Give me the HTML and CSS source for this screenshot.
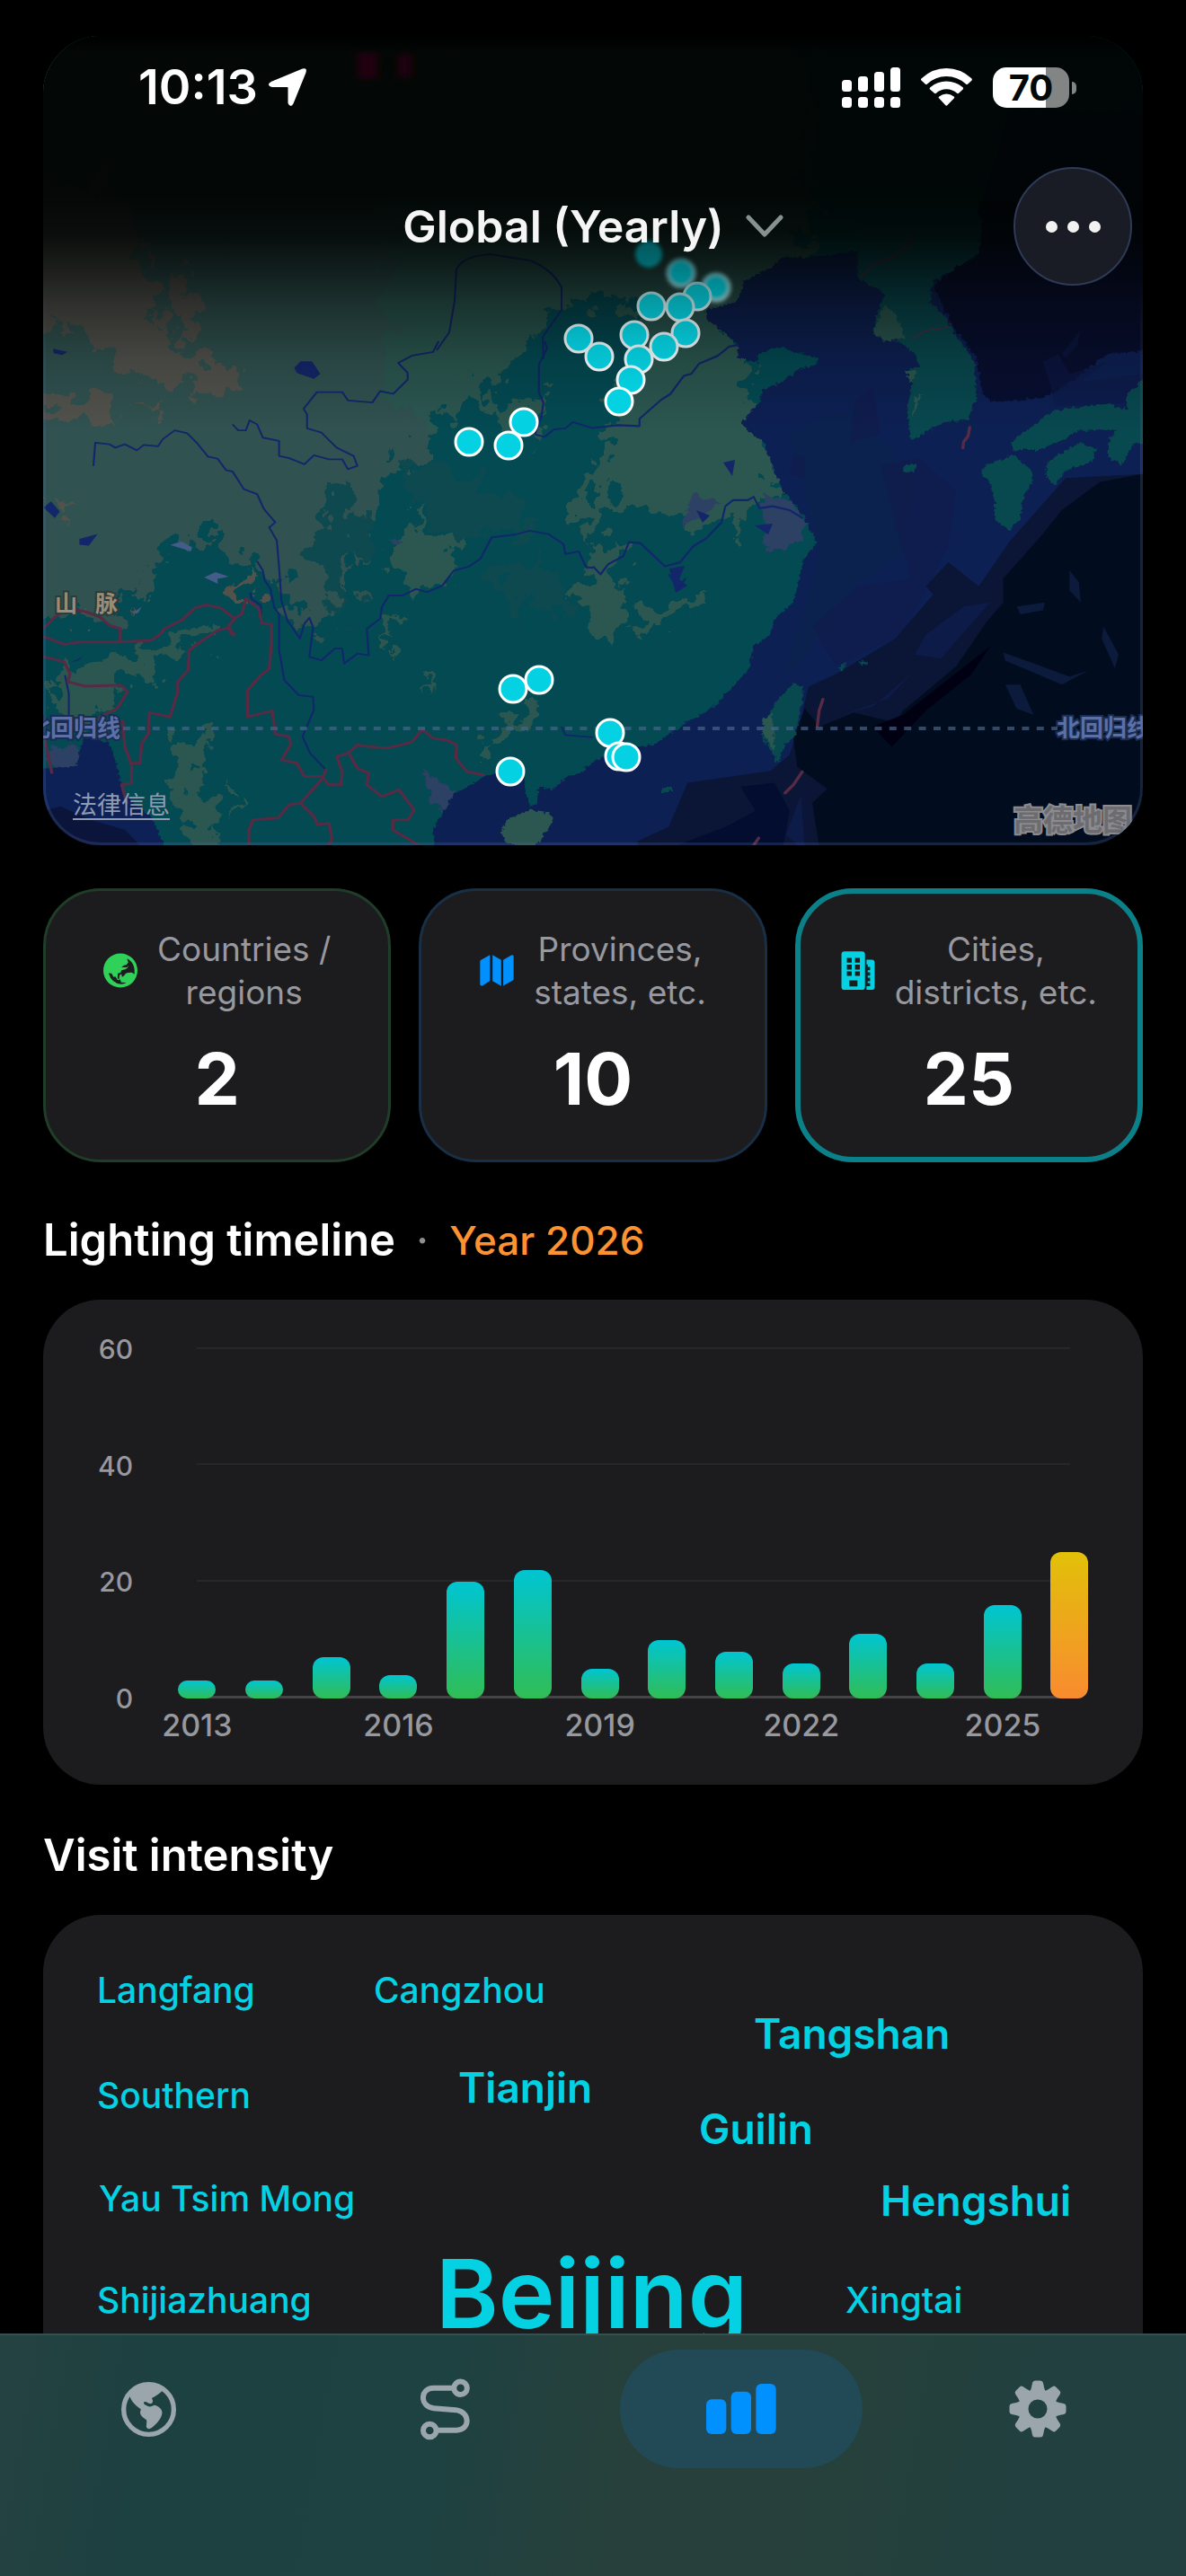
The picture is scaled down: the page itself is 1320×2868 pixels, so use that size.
FILE: index.html
```html
<!DOCTYPE html>
<html lang="en">
<head>
<meta charset="utf-8">
<meta name="viewport" content="width=device-width, initial-scale=1">
<title>Global (Yearly)</title>
<link rel="stylesheet" href="styles.css">
</head>
<body>
<div class="app">
  <header class="header">
    <div class="status">
      <div class="status-group">
        <span class="clock">10:13</span>
        <svg class="icon-location" viewBox="0 0 42 42" aria-hidden="true"><path d="M38 1.500Q42 0 40.500 4.500L26.500 39Q24.500 43 22.500 38.500V21.500Q22.500 20 21 20H4Q-1.500 18.500 3 16Z" fill="#fff" stroke="#fff" stroke-width="2" stroke-linejoin="round"/></svg>
      </div>
      <div class="status-group status-right">
        <svg class="icon-signal" viewBox="0 0 65 45" fill="#fff" aria-hidden="true">
          <rect x="0" y="14" width="11" height="13" rx="3.500"/><rect x="18" y="10" width="11" height="17" rx="3.500"/><rect x="36" y="5" width="11" height="22" rx="3.500"/><rect x="54" y="0" width="11" height="27" rx="3.500"/>
          <rect x="0" y="33" width="11" height="12" rx="3.500"/><rect x="18" y="33" width="11" height="12" rx="3.500"/><rect x="36" y="33" width="11" height="12" rx="3.500"/><rect x="54" y="33" width="11" height="12" rx="3.500"/>
        </svg>
        <svg class="icon-wifi" viewBox="375 105 172 127" fill="#fff" aria-hidden="true">
          <path d="M376 146Q373 143 377 139Q413 105 460.500 105T545 139Q548 143 546 146L532 159Q529 161 526 158Q498 132 460.500 132T396 158Q393 161 390 159Z"/>
          <path d="M405 176Q402 173 406 169Q430 149 460.500 149T516 169Q519 173 516 176L502 189Q499 192 496 189Q481 175 460.500 175T426 189Q423 192 420 189Z"/>
          <path d="M436 206Q432 203 436 200Q460.500 183 486 200Q489 203 486 206L464 229Q460.500 233 457 229Z"/>
        </svg>
        <div class="battery"><span class="battery-level">70</span></div>
      </div>
    </div>
    <div class="toolbar">
      <button class="scope" type="button">Global (Yearly)
        <svg class="icon-chevron" viewBox="0 0 42 26" aria-hidden="true"><path d="M3 3L21 22L39 3" fill="none" stroke="#87918f" stroke-width="5" stroke-linecap="round" stroke-linejoin="round"/></svg>
      </button>
      <button class="more" type="button" aria-label="More"><i></i><i></i><i></i></button>
    </div>
  </header>

  <main class="content">
    <section class="map" aria-label="Visited places">
      <svg class="map-canvas" viewBox="48 40 1224 901" preserveAspectRatio="xMidYMid slice" role="img" aria-label="Map of East Asia">
        <defs>
          <linearGradient id="fade" gradientUnits="userSpaceOnUse" x1="0" y1="40" x2="0" y2="480">
            <stop offset="0" stop-color="#000302" stop-opacity=".95"/><stop offset=".4" stop-color="#000302" stop-opacity=".94"/><stop offset=".5" stop-color="#000302" stop-opacity=".87"/><stop offset=".58" stop-color="#000302" stop-opacity=".68"/><stop offset=".68" stop-color="#000302" stop-opacity=".42"/><stop offset=".82" stop-color="#000302" stop-opacity=".16"/><stop offset="1" stop-color="#000302" stop-opacity="0"/>
          </linearGradient>
          <linearGradient id="pin-fill" gradientUnits="userSpaceOnUse" x1="0" y1="265" x2="0" y2="440">
            <stop offset="0" stop-color="#04676e"/><stop offset=".4" stop-color="#049aa5"/><stop offset=".65" stop-color="#04b9c7"/><stop offset="1" stop-color="#04d2e2"/>
          </linearGradient>
          <linearGradient id="pin-ring" gradientUnits="userSpaceOnUse" x1="0" y1="265" x2="0" y2="440">
            <stop offset="0" stop-color="#0c5054"/><stop offset=".3" stop-color="#6d9a9c"/><stop offset=".5" stop-color="#b0c0c2"/><stop offset="1" stop-color="#fff"/>
          </linearGradient>
          <linearGradient id="edge" gradientUnits="userSpaceOnUse" x1="0" y1="40" x2="0" y2="60"><stop offset="0" stop-color="#000"/><stop offset="1" stop-color="#000" stop-opacity="0"/></linearGradient>
          <filter id="rough" x="-5%" y="-5%" width="110%" height="110%" color-interpolation-filters="sRGB"><feTurbulence type="fractalNoise" baseFrequency=".04" numOctaves="4" seed="4"/><feDisplacementMap in="SourceGraphic" scale="70" xChannelSelector="R" yChannelSelector="G"/></filter>
          <filter id="coast" x="-5%" y="-5%" width="110%" height="110%" color-interpolation-filters="sRGB"><feTurbulence type="fractalNoise" baseFrequency=".09" numOctaves="3" seed="8"/><feDisplacementMap in="SourceGraphic" scale="16" xChannelSelector="R" yChannelSelector="G"/></filter>
          <filter id="soft"><feGaussianBlur stdDeviation="2"/></filter>
          <filter id="blur"><feGaussianBlur stdDeviation="5"/></filter>
        </defs>
        <rect x="0" y="0" width="1360" height="980" fill="#034a53"/>

        <!-- highlands and plains -->
        <g filter="url(#rough)">
          <path fill="#305250" d="M-60 -60H560V390L500 440L480 500L420 540L410 590L390 660L370 700L330 690L320 650L290 640L260 620L240 600L190 600L170 640L120 690L-60 690Z"/>
          <path fill="#2b5750" d="M430 -60H900V290L800 360L840 400L820 430L850 480L860 530L880 560L840 560L820 600L790 580L740 600L730 570L670 550L650 620L640 560L655 520L600 460L590 500L540 450L520 430L490 480L450 470L430 400Z"/>
          <path fill="#034a53" d="M625 340L690 330L720 400L680 450L660 540L640 540L600 500L610 440L550 450L560 410ZM700 570L740 560L765 590L730 615Z"/>
          <path fill="#0f4950" d="M365 545L390 540L395 570L410 600L385 640L390 690L365 660L345 620ZM450 510L500 520L570 560L600 580L570 600L500 590L460 560ZM540 640L600 620L640 670L570 690Z"/>
          <path fill="#2b5750" d="M430 620L465 565L475 590L520 590L500 640L490 660L450 655ZM655 620L690 600L700 650L680 720L650 690ZM205 930L190 860L215 810L235 830L225 870L245 941ZM250 870L265 890L260 910ZM60 730L110 735L170 725L230 690L240 700L180 745L130 760L135 780L110 800L60 800ZM430 700L445 710L430 730ZM470 740L480 745L475 770ZM640 660L660 650L650 680ZM540 820L590 790L595 800L555 840ZM700 690L740 670L790 660L770 680L710 705Z"/>
          <path fill="#52524d" d="M-60 200L130 210L180 330L175 370L250 410L265 435L190 430L140 410L110 380L60 370L-60 370ZM-60 455L110 440L140 470L60 465ZM190 300L220 340L215 380L190 350ZM150 450L175 450L170 460ZM50 560L85 558L70 575ZM260 630L285 660L282 675L262 655ZM150 670L165 655L162 668ZM90 700L100 678L108 690Z"/>
        </g>
        <g fill="#2c4163" filter="url(#coast)">
          <path d="M845 545L880 560L895 580L890 605L855 615ZM50 835L85 830L95 850L60 862ZM470 860L505 880L500 905L480 895ZM433 598L444 600L438 610ZM770 550L800 560L760 590Z"/>
        </g>

        <!-- seas -->
        <g transform="translate(660 260) scale(.4209 .4464)">
          <path fill="#0d2053" filter="url(#coast)" d="M500 60L480 80L400 120L380 170L300 190L300 215L340 240L385 280L380 310L435 320L440 300L490 280L530 295L595 310L590 325L540 340L500 370L450 390L440 420L390 475L450 520L480 590L500 640L555 700L590 770L555 820L540 880L530 920L480 960L470 1000L425 1030L415 1080L380 1120L320 1180L240 1225L160 1275L50 1290L-20 1330V1620H1520V-80H1030L1100 -300H1520V0H1030L570 60Z"/>
          <path fill="#0c244f" d="M520 500L620 450L700 440L850 620L820 800L700 870L600 1000L540 1080L500 1100L560 940L600 790Z" opacity=".7"/>
          <path fill="#111c4c" d="M690 420L740 380L760 500L680 520ZM800 700L840 680L850 750L800 740ZM530 550L560 560L560 610L520 600ZM760 580L860 560L960 640L940 780L820 1000L640 1080L580 980L700 880L840 860Z" opacity=".65"/>
          <path fill="#0b1535" d="M1454 600L1250 610L1100 770L1020 880L940 820L880 880L900 900L800 1010L640 1100L570 1130L550 1210L520 1300L470 1340L250 1370L200 1480L60 1540H1000L1300 1000L1454 700Z"/>
          <path fill="#010c1f" d="M1454 600L1340 620L1240 690L1180 760L1085 860V920L1040 970L960 1080L820 1190L800 1220L690 1195L600 1230L560 1185L530 1260L540 1330L620 1385L580 1420L600 1540H1470Z"/>
          <path fill="#020d30" d="M390 1380L480 1370L520 1440L500 1540H180L350 1480L430 1440Z"/>
          <path fill="#000012" d="M1050 1030L1000 1100L880 1190L790 1280L740 1230L820 1200Z"/>
          <path fill="#080e30" filter="url(#coast)" d="M900 130L970 80L1020 50V-80H1470V290L1360 300L1250 380L1190 410L1060 420L1030 400L1015 310L950 230Z"/>
          <path fill="#0c1a48" opacity=".6" d="M1190 320L1230 300L1260 350L1360 320L1290 370L1454 350V420L1220 430L1210 380ZM1240 300L1290 240L1280 280L1250 310Z"/>
          <path fill="#0d2053" opacity=".6" d="M740 1180L850 1090L780 1160L660 1200ZM880 1000L980 930L1050 920L920 1060L850 1050ZM510 1500L550 1400L560 1540Z"/>
          <path fill="#0c1a3c" d="M1260 840L1285 870L1290 920L1260 890ZM1120 930L1195 920L1190 940L1130 950ZM1350 980L1390 1050L1380 1085L1345 1010ZM1085 1045L1160 1070L1260 1105L1310 1090L1240 1125L1090 1065ZM1090 1125L1130 1125L1165 1200L1120 1185Z"/>
          <g fill="#08484f" filter="url(#coast)">
            <path d="M700 110L770 150L740 240L780 255L810 270L850 300L865 330L825 345L845 370L830 440L842 515L890 490L930 470L990 465L1015 410L1008 320L950 240L935 210L890 170L900 120L970 80L1020 50L1030 -40H700Z"/>
            <path d="M1110 550L1160 590V625L1140 650L1130 710L1100 740L1060 710L1065 670L1050 620L1025 600L1040 575L1090 560Z"/>
            <path d="M1105 520L1190 460L1220 440L1360 425L1415 440L1410 405L1480 340V520L1430 525L1400 575L1362 560L1365 510L1390 490L1290 490L1250 510L1180 540L1110 540Z"/>
            <path d="M1200 570L1290 520L1330 540L1320 570L1250 590L1220 630L1200 610Z"/>
            <path d="M555 1130L530 1120L490 1160L470 1190L450 1230V1260L490 1320L505 1280L535 1250L555 1160Z"/>
            <path d="M820 580L858 572L850 592L822 594ZM645 1085L670 1070L660 1092ZM708 1066L728 1075L710 1078ZM185 1382H211V1391H185Z"/>
          </g>
          <path fill="#2b5750" filter="url(#coast)" d="M740 245L770 180L800 200L825 260L770 270ZM825 340L860 345L840 370ZM850 410L870 400L845 460ZM450 1210L475 1200L480 1290L450 1250Z"/>
        </g>
        <g transform="translate(0 380) scale(.4209 .3699)">
          <path fill="#0d2053" filter="url(#coast)" d="M1620 1275L1500 1310L1460 1350L1425 1340L1420 1390L1400 1400L1385 1330L1390 1290L1340 1290L1280 1310L1240 1340L1200 1360L1170 1420L1145 1470L1150 1560H1700Z"/>
          <path fill="#2b5750" filter="url(#coast)" d="M1340 1440L1400 1410L1450 1420L1465 1440L1430 1500L1400 1530L1340 1510L1325 1480Z"/>
          <path fill="#0e2157" filter="url(#coast)" d="M60 1290L200 1280L220 1190L290 1210L310 1280L325 1360L400 1430L450 1560H60Z"/>
          <path fill="#0b153c" d="M90 1420L160 1400L240 1440L330 1470L390 1540H90Z"/>
          <path fill="#14266a" d="M778 80L795 60L825 60L847 98L830 113L785 95ZM210 595L258 580L235 615L210 612ZM140 22L178 32L165 41L142 36ZM115 500L135 482L158 512L145 532ZM190 965L220 948L205 962Z"/>
          <path fill="#445c88" d="M450 613L480 602L508 620L505 632ZM540 710L570 695L605 708L575 715L576 730ZM350 820L375 798L365 818Z"/>
        </g>
        <path fill="#14266a" d="M745 633L762 630L756 645L765 652L752 660ZM805 515L818 512L815 530ZM840 585L860 583L855 595ZM775 568L790 574L782 582Z"/>

        <!-- rivers -->
        <g fill="none" stroke="#12266b" stroke-width="2" stroke-linejoin="round">
          <g transform="translate(0 380) scale(.4209 .3699)">
            <g stroke-width="5">
              <path d="M247 375L252 305L290 310L305 320L330 310L362 328L380 312L418 316L430 295L462 268L495 277L520 305L550 347L575 353L598 388L615 392L645 445L680 460L698 505L728 545L712 560L732 600L738 680L744 780L760 840L793 895L805 850L818 832L828 860L818 950L850 960L885 925L905 925L910 970L945 940L975 945L970 865L1005 835L1010 800L1028 765L1065 765L1100 745L1130 755L1170 735L1200 690L1240 678L1270 655L1300 590L1360 582L1400 570L1450 580L1490 610L1495 640L1530 632L1550 680L1568 682"/>
              <path d="M615 250L630 268H650L660 238L680 250L695 290L738 300V345L765 352L805 370L830 343L870 355L905 355L920 385L945 375L935 345L890 320L850 275L812 262V220L803 203L838 153H905L920 178L985 184L1005 150L1040 158L1078 115L1078 95L1053 65L1090 43L1145 32L1160 0"/>
              <path d="M1440 0L1447 20L1425 70V155L1437 185L1432 225L1415 280L1440 288L1465 265L1495 262L1515 243L1568 262"/>
              <path d="M680 662L695 690L700 720L715 745L725 800L738 822L738 930L752 1020L790 1065L828 1070L830 1110L800 1190L820 1240L862 1290M662 755L665 775L690 795V825M172 1005L182 1060V1135M1485 1160L1495 1185L1568 1192"/>
            </g>
          </g>
          <g transform="translate(660 260) scale(.4209 .4464)">
            <g stroke-width="5">
              <path d="M0 485L65 478L123 480V462L180 415L205 400L240 355L260 350L280 325L330 305L360 282L385 278"/>
              <path d="M0 830L20 850L40 825L80 805L95 770L125 772L190 830L230 820L265 780L300 760L340 720L350 680L370 665H410L425 657L440 685L475 680L520 690L555 710"/>
              <path d="M200 850L225 885L245 860"/>
            </g>
          </g>
          <path d="M486 390L500 370L506 335L508 300Q515 285 545 283L590 290Q615 300 625 320V345L604 375L605 400"/>
        </g>

        <!-- borders -->
        <g fill="none" stroke="#572b44" stroke-linejoin="round" stroke-linecap="round">
          <g transform="translate(0 380) scale(.4209 .3699)" stroke-width="8">
            <path d="M118 860L150 825L185 805L230 815L265 830L290 855L318 865V905L400 900L425 880L435 865L480 840L515 803L545 793L585 803L620 835L640 820L650 775L685 805L692 848L718 852V905L712 985L690 1005L655 1050L655 1130L720 1112L728 1182L765 1190L768 1215L745 1260L785 1270L805 1310L850 1310L870 1335H902L905 1295L890 1250L920 1240L945 1215L1020 1225L1060 1215L1090 1205L1117 1168L1145 1195L1180 1200L1208 1215L1205 1255L1235 1295L1278 1305"/>
            <path d="M118 890L170 912L210 905L318 905M620 885L605 862L575 870L530 905L500 930L498 990L470 1025L470 1055L450 1130L395 1118L393 1180L375 1210L370 1270L348 1270M610 880L605 855L622 835M118 950L170 965L185 1000L180 1025L225 1038L320 1035L337 1055L310 1105L265 1130L260 1150L300 1140L325 1145L330 1220L348 1275V1330L322 1335L335 1390M118 1195L137 1298"/>
            <path d="M862 1290L850 1320L830 1345L795 1390L765 1395L735 1435L670 1440L658 1470V1516M795 1390L830 1430L840 1455L870 1450L878 1500L868 1516M925 1245L945 1285L975 1300L970 1335L1010 1370L1055 1350L1095 1410L1080 1440L1040 1440L1038 1470L1105 1516"/>
          </g>
          <g transform="translate(660 260) scale(.4209 .4464)" stroke-width="8">
            <path d="M996 484L992 505L980 520L978 534M608 1162L598 1190L593 1228M553 1343L530 1375L508 1395M438 1508L426 1524"/>
            <path d="M845 262L880 242L930 236L945 225" stroke-width="4" stroke-dasharray="10 8"/>
            <path d="M710 108L745 75L790 60L830 30L845 0" stroke-width="5"/>
          </g>
        </g>

        <path d="M137 811H1177" stroke="#47648a" stroke-opacity=".7" stroke-width="4" stroke-dasharray="8 8.400"/>
        <g class="map-label">
          <text x="30" y="820" class="label-water">北回归线</text>
          <text x="1176" y="820" class="label-water">北回归线</text>
          <text x="61" y="681" class="label-range">山</text>
          <text x="106" y="681" class="label-range">脉</text>
        </g>
        <rect x="0" y="0" width="1360" height="480" fill="url(#fade)"/>

        <!-- visited cities -->
        <g fill="url(#pin-fill)" stroke="url(#pin-ring)" stroke-width="3">
          <g filter="url(#soft)"><circle cx="722" cy="283" r="15" stroke="none" opacity=".8"/><circle cx="758" cy="304" r="15"/><circle cx="797" cy="320" r="15"/></g>
          <circle cx="776" cy="330" r="15"/><circle cx="725" cy="341" r="15"/><circle cx="757" cy="342" r="15"/><circle cx="763" cy="371" r="15"/><circle cx="739" cy="386" r="15"/><circle cx="706" cy="373" r="15"/><circle cx="711" cy="400" r="15"/><circle cx="702" cy="423" r="15"/><circle cx="689" cy="447" r="15"/><circle cx="644" cy="377" r="15"/><circle cx="667" cy="397" r="15"/>
          <circle cx="583" cy="470" r="15"/><circle cx="522" cy="492" r="15"/><circle cx="566" cy="496" r="15"/><circle cx="600" cy="757" r="15"/><circle cx="571" cy="767" r="15"/><circle cx="568" cy="859" r="15"/><circle cx="679" cy="816" r="15"/><circle cx="689" cy="842" r="15"/><circle cx="697" cy="843" r="15"/>
        </g>
        <path d="M398 58H420V88H398ZM443 60H458V86H443Z" fill="#24060a" filter="url(#blur)"/>
        <rect x="0" y="0" width="1360" height="60" fill="url(#edge)"/>
      </svg>
      <div class="map-footer">
        <a class="legal" href="#legal">法律信息</a>
        <span class="provider">高德地图</span>
      </div>
    </section>

    <section class="stats" aria-label="Totals">
      <button class="stat stat-green" type="button">
        <span class="stat-label">
          <svg class="icon-stat" viewBox="45 93 111 111" aria-hidden="true"><circle cx="100.500" cy="148.500" r="55.500" fill="#30d158"/>
            <g fill="#1c1c1e"><path d="M122 110C141 119 149 138 146 161L138 155Q126 154 118 158L112 166L106 170L104 160L98 163L96 178L91 173L92 158L101 156L104 148L116 145L124 140L127 132L122 138L104 138L112 132L120 130L126 122Z"/><path d="M62 157L72 158L78 170L84 168L92 180L100 178L103 187L120 188Q112 193 103 193Q72 190 62 157Z"/></g></svg>
          <span>Countries /<br>regions</span>
        </span>
        <span class="stat-value">2</span>
      </button>
      <button class="stat stat-blue" type="button">
        <span class="stat-label">
          <svg class="icon-stat" viewBox="1298 98 115 107" fill="#0091ff" aria-hidden="true"><path d="M1299 122Q1299 118 1302 116L1332 99V186L1308 202Q1299 206 1299 197Z"/><path d="M1341 99L1370 116V204L1341 187Z"/><path d="M1377 116L1404 100Q1412 97 1412 106V181Q1412 184 1409 185L1377 203Z"/></svg>
          <span>Provinces,<br>states, etc.</span>
        </span>
        <span class="stat-value">10</span>
      </button>
      <button class="stat stat-cyan" type="button" aria-pressed="true">
        <span class="stat-label">
          <svg class="icon-stat" viewBox="106 86 110 128" aria-hidden="true">
            <path d="M189 114H206Q216 114 216 124V204Q216 214 206 214H189V202H201V192H193V186H201V174H193V167H201V156H193V149H201V138H193V130H189Z" fill="#04d2e2"/>
            <rect x="106" y="87" width="78" height="127" rx="10" fill="#04d2e2"/>
            <g fill="#1c1c1e"><path d="M124 108H140V124H124ZM151 108H167V124H151ZM124 131H140V147H124ZM151 131H167V147H151ZM124 153H140V168H124ZM151 153H167V168H151ZM132 183H159V203H132Z"/></g>
          </svg>
          <span>Cities,<br>districts, etc.</span>
        </span>
        <span class="stat-value">25</span>
      </button>
    </section>

    <section class="section">
      <h2 class="section-title">Lighting timeline <span class="dot">·</span> <span class="year">Year 2026</span></h2>
      <div class="card chart">
        <div class="y-axis"><span>60</span><span>40</span><span>20</span><span>0</span></div>
        <div class="plot">
          <div class="gridlines"><i></i><i></i><i></i><i></i></div>
          <div class="bars">
            <i style="--v:3"></i><i style="--v:3"></i><i style="--v:7"></i><i style="--v:4"></i><i style="--v:20"></i><i style="--v:22"></i><i style="--v:5"></i><i style="--v:10"></i><i style="--v:8"></i><i style="--v:6"></i><i style="--v:11"></i><i style="--v:6"></i><i style="--v:16"></i><i class="current" style="--v:25"></i>
          </div>
        </div>
        <div class="x-axis"><span>2013</span><span></span><span></span><span>2016</span><span></span><span></span><span>2019</span><span></span><span></span><span>2022</span><span></span><span></span><span>2025</span><span></span></div>
      </div>
    </section>

    <section class="section">
      <h2 class="section-title">Visit intensity</h2>
      <div class="card cloud">
        <span class="word small" style="left:60px;top:60px">Langfang</span>
        <span class="word small" style="left:368px;top:60px">Cangzhou</span>
        <span class="word medium" style="left:791px;top:102px">Tangshan</span>
        <span class="word medium" style="left:462px;top:162px">Tianjin</span>
        <span class="word small" style="left:60px;top:177px">Southern</span>
        <span class="word medium" style="left:730px;top:208px">Guilin</span>
        <span class="word small" style="left:62px;top:292px">Yau Tsim Mong</span>
        <span class="word medium" style="left:932px;top:288px">Hengshui</span>
        <span class="word small" style="left:60px;top:405px">Shijiazhuang</span>
        <span class="word large" style="left:437px;top:356px">Beijing</span>
        <span class="word small" style="left:893px;top:405px">Xingtai</span>
      </div>
    </section>
  </main>

  <nav class="tabs" aria-label="Main">
    <a class="tab" href="#globe" aria-label="Globe">
      <svg class="icon-globe" viewBox="102 125 184 184" aria-hidden="true"><circle cx="194" cy="217" r="84" fill="none" stroke="#9aa5ac" stroke-width="16"/><path fill="#9aa5ac" d="M130 172C136 192 150 204 168 217C161 233 168 239 186 252C190 262 182 275 189 280Q195 285 204 279C222 264 240 245 239 226C237 215 228 207 214 203C205 205 200 211 190 206C182 201 174 198 179 192C187 189 190 198 200 198C209 197 210 186 204 179C218 172 230 164 239 155L232 143Q193 120 155 143Z"/></svg>
    </a>
    <a class="tab" href="#routes" aria-label="Routes">
      <svg class="icon-route" viewBox="1101 116 166 206" fill="none" stroke="#9aa5ac" stroke-width="18" aria-hidden="true"><circle cx="1235.500" cy="147.500" r="22"/><circle cx="1132" cy="290" r="22"/><path d="M1208 147H1145C1098 147 1098 211 1145 215L1220 221C1269 227 1269 289 1222 289H1160"/></svg>
    </a>
    <a class="tab active" href="#stats" aria-label="Statistics" aria-current="page">
      <svg class="icon-bars" viewBox="78 132 234 168" fill="#0091ff" aria-hidden="true"><rect x="78" y="184" width="67" height="116" rx="18"/><rect x="161" y="158" width="67" height="142" rx="18"/><rect x="244" y="132" width="67" height="168" rx="18"/></svg>
    </a>
    <a class="tab" href="#settings" aria-label="Settings">
      <svg class="icon-gear" viewBox="0 0 64 64" aria-hidden="true">
        <g fill="#9aa5ac"><g id="teeth"><path id="tooth" d="M22 14Q24.500 11 25 8L26 3Q26.500 .5 29 .5H35Q37.500 .5 38 3L39 8Q39.500 11 42 14V50Q39.500 53 39 56L38 61Q37.500 63.500 35 63.500H29Q26.500 63.500 26 61L25 56Q24.500 53 22 50Z"/><use href="#tooth" transform="rotate(45 32 32)"/></g><use href="#teeth" transform="rotate(90 32 32)"/></g>
        <circle cx="32" cy="32" r="10.500" fill="#21413f"/>
      </svg>
    </a>
  </nav>
</div>
</body>
</html>
```
FILE: styles.css
```css
* {
  box-sizing: border-box;
}

body {
  margin: 0;
  background: #000;
  color: #fff;
  font-family: Inter, "Noto Sans CJK SC", sans-serif;
}

button {
  border: 0;
  padding: 0;
  background: none;
  color: inherit;
  font: inherit;
}

svg {
  display: block;
  flex: none;
}

.app {
  position: relative;
  display: flex;
  flex-direction: column;
  height: 100vh;
  overflow: hidden;
}

/* Header floats over the map */
.header {
  position: absolute;
  inset: 0 0 auto;
  z-index: 2;
  padding-top: 60px;
}

.status {
  display: flex;
  align-items: center;
  justify-content: space-between;
  height: 74px;
  padding: 0 130px 0 154px;
}

.status-group {
  display: flex;
  align-items: center;
  gap: 12px;
}

.status-right {
  gap: 23px;
}

.clock {
  font-size: 54px;
  font-weight: 600;
  line-height: 74px;
}

.icon-location { width: 42px; height: 42px; }
.icon-signal { width: 65px; height: 45px; }
.icon-wifi { width: 57px; height: 42px; }

.battery {
  position: relative;
  width: 85px;
  height: 45px;
  border-radius: 15px;
  background: linear-gradient(90deg, #fff 70%, #838484 70%);
  color: #020907;
  text-align: center;
}

.battery::after {
  content: "";
  position: absolute;
  right: -8px;
  top: 16px;
  width: 5px;
  height: 14px;
  border-radius: 0 5px 5px 0;
  background: #838484;
}

.battery-level {
  font-size: 40px;
  font-weight: 700;
  line-height: 45px;
}

.toolbar {
  display: grid;
  grid-template-columns: 1fr auto 1fr;
  align-items: center;
  margin-top: 52px;
  padding: 0 60px;
}

.scope {
  grid-column: 2;
  display: flex;
  align-items: center;
  gap: 24px;
  color: #f5f5f5;
  font-size: 50px;
  font-weight: 600;
  line-height: 60px;
}

.icon-chevron { width: 42px; height: 26px; }

.more {
  justify-self: end;
  display: flex;
  align-items: center;
  justify-content: center;
  gap: 11px;
  width: 132px;
  height: 132px;
  border: 2px solid #2f3a57;
  border-radius: 50%;
  background: #191b25;
}

.more i {
  width: 13px;
  height: 13px;
  border-radius: 50%;
  background: #f2f2f2;
}

/* Scrolling content */
.content {
  flex: 1;
  min-height: 0;
  overflow-y: auto;
  scrollbar-width: none;
  padding: 40px 48px 0;
}

.map {
  position: relative;
  aspect-ratio: 1224 / 901;
  border-radius: 64px;
  overflow: hidden;
}

.map::after {
  content: "";
  position: absolute;
  inset: 0;
  border: 3px solid rgba(90, 110, 150, .25);
  border-top: 0;
  border-radius: 64px;
  pointer-events: none;
  -webkit-mask-image: linear-gradient(transparent 30%, #000 50%);
  mask-image: linear-gradient(transparent 30%, #000 50%);
}

.map-canvas {
  width: 100%;
  height: 100%;
}

.map-label {
  font-family: "Noto Sans CJK SC", sans-serif;
  font-weight: 700;
  paint-order: stroke;
  stroke-width: 4px;
}

.label-water {
  font-size: 26px;
  fill: #5c70a8;
  stroke: #1a2c50;
}

.label-range {
  font-size: 25px;
  fill: #9a8c78;
  stroke: #2b3d3a;
}

.map-footer {
  position: absolute;
  inset: auto 12px 10px 33px;
  display: flex;
  align-items: flex-end;
  justify-content: space-between;
}

.legal {
  padding-bottom: 16px;
  color: #8f9bb2;
  font-size: 27px;
  line-height: 36px;
  text-underline-offset: 5px;
}

.provider {
  color: #6c6c70;
  font-size: 33px;
  font-weight: 700;
  line-height: 36px;
  paint-order: stroke;
  -webkit-text-stroke: 4px #8c8c90;
}

/* Totals */
.stats {
  display: grid;
  grid-template-columns: repeat(3, 1fr);
  gap: 31px;
  margin: 48px 0 57px;
}

.stat {
  display: flex;
  flex-direction: column;
  align-items: center;
  justify-content: center;
  gap: 24px;
  height: 305px;
  padding-bottom: 2px;
  border: 3px solid;
  border-radius: 64px;
  background: #1c1c1e;
}

.stat-green { border-color: #203d29; }
.stat-blue { border-color: #182f46; }
.stat-cyan { border: 6px solid #0b8088; }

.stat-label {
  display: flex;
  align-items: center;
  gap: 22px;
  color: #98989f;
  font-size: 37px;
  line-height: 48px;
}

.icon-stat { width: 38px; height: 43px; }

.stat-value {
  font-size: 80px;
  font-weight: 700;
  line-height: 96px;
}

/* Sections */
.section {
  margin-bottom: 49px;
}

.section-title {
  display: flex;
  align-items: center;
  gap: 23px;
  margin: 0 0 36px;
  font-size: 49px;
  font-weight: 600;
  line-height: 60px;
}

.dot {
  color: #8e8e93;
  font-weight: 400;
}

.year {
  color: #ff9230;
  font-size: 44px;
  font-weight: 500;
}

.card {
  border-radius: 64px;
  background: #1c1c1e;
}

.chart {
  display: grid;
  grid-template-columns: 52px 1fr;
  column-gap: 34px;
  row-gap: 10px;
  padding: 53px 44px 46px 48px;
  color: #98989f;
  font-weight: 500;
}

.y-axis {
  display: flex;
  flex-direction: column;
  justify-content: space-between;
  margin: -18px 0 -20px;
  font-size: 30px;
  line-height: 40px;
  text-align: right;
}

.plot {
  display: grid;
  height: 391px;
}

.gridlines,
.bars {
  grid-area: 1 / 1;
}

.gridlines {
  display: flex;
  flex-direction: column;
  justify-content: space-between;
  margin: 0 37px;
}

.gridlines i {
  height: 2px;
  background: #272729;
}

.gridlines i:last-child {
  height: 3px;
  background: #444446;
}

.bars {
  display: flex;
  align-items: flex-end;
  justify-content: space-around;
}

.bars i {
  width: 42px;
  height: calc(var(--v) / 60 * 100%);
  border-radius: 12px;
  background: linear-gradient(#00c5d2, #30bd55);
}

.bars .current {
  background: linear-gradient(#e2c109, #f98b30);
}

.x-axis {
  grid-column: 2;
  display: grid;
  grid-template-columns: repeat(14, minmax(0, 1fr));
  font-size: 34px;
  line-height: 40px;
}

.x-axis span {
  display: flex;
  justify-content: center;
}

/* Word cloud: each word has its own place on the canvas */
.cloud {
  position: relative;
  height: 760px;
}

.word {
  position: absolute;
  color: #04d2e2;
  font-weight: 500;
  white-space: nowrap;
}

.small { font-size: 39px; line-height: 48px; }
.medium { font-size: 46px; line-height: 60px; font-weight: 600; }
.large { font-size: 106px; line-height: 132px; font-weight: 600; }

/* Tab bar */
.tabs {
  display: grid;
  grid-template-columns: repeat(4, 1fr);
  justify-items: center;
  flex: none;
  height: 270px;
  padding-top: 16px;
  border-top: 2px solid #35514f;
  background: linear-gradient(100deg, #244240, #1d4040 14%, #1e4141 38%, #27403b 52%, #27403b 68%, #21403f 85%, #23403f);
}

.tab {
  display: flex;
  align-items: center;
  justify-content: center;
  width: 270px;
  height: 132px;
  border-radius: 66px;
}

.tab.active { background: #214a56; }

.icon-globe { width: 61px; height: 61px; }
.icon-route { width: 55px; height: 69px; }
.icon-bars { width: 78px; height: 56px; }
.icon-gear { width: 64px; height: 64px; }
```
